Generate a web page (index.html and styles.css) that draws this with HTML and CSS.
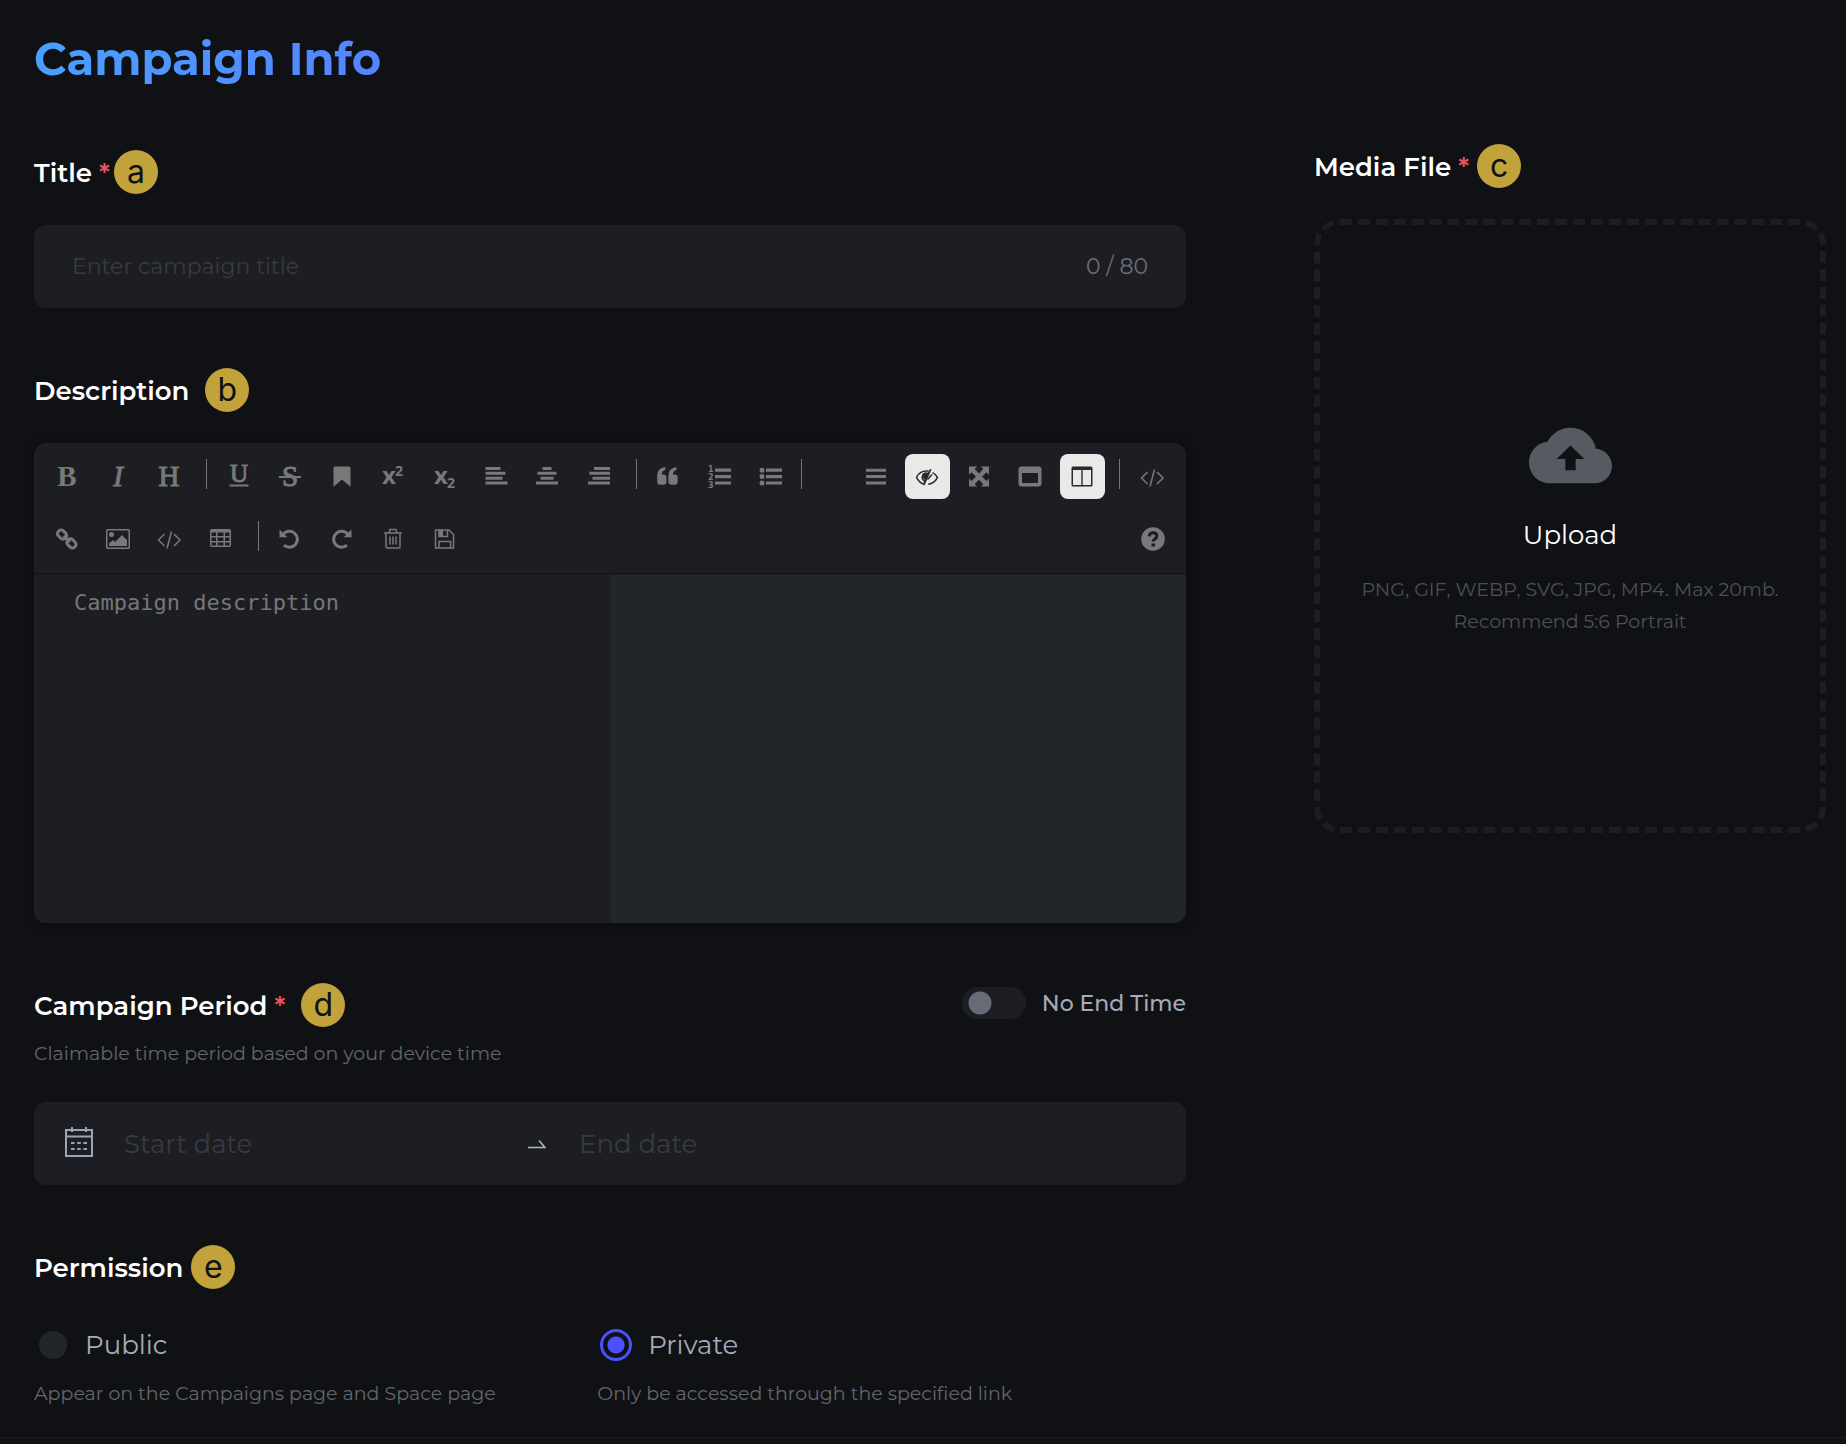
FILE: index.html
```html
<!DOCTYPE html>
<html lang="en">
<head>
<meta charset="utf-8">
<meta name="viewport" content="width=device-width, initial-scale=1">
<title>Campaign Info</title>
<link rel="stylesheet" href="styles.css">
</head>
<body>
<main class="page">
  <h1 class="page-title">Campaign Info</h1>
  <form class="layout">
    <div class="main-col">
      <section class="field">
        <div class="label-row label-row--tight">
          <label class="label" for="title">Title <span class="required">*</span></label>
          <span class="badge">a</span>
        </div>
        <div class="box">
          <input class="box-input" id="title" type="text" maxlength="80" placeholder="Enter campaign title">
          <span class="counter">0 / 80</span>
        </div>
      </section>

      <section class="field">
        <div class="label-row label-row--wide">
          <label class="label" for="description">Description</label>
          <span class="badge">b</span>
        </div>
        <div class="editor">
          <div class="toolbar">
            <div class="tools tools--format">
              <button class="tool" type="button" aria-label="Bold"><svg class="icon" viewBox="0 0 24 24"><text class="glyph glyph--bold" x="12" y="21">B</text></svg></button>
              <button class="tool" type="button" aria-label="Italic"><svg class="icon" viewBox="0 0 24 24"><text class="glyph glyph--italic" x="12" y="21">I</text></svg></button>
              <button class="tool" type="button" aria-label="Heading"><svg class="icon" viewBox="0 0 24 24"><text class="glyph" x="12" y="21">H</text></svg></button>
              <span class="divider"></span>
              <button class="tool" type="button" aria-label="Underline"><svg class="icon" viewBox="0 0 24 24"><text class="glyph glyph--small" x="12" y="17">U</text><path d="M2.500 19.500h19v2h-19z"/></svg></button>
              <button class="tool" type="button" aria-label="Strikethrough"><svg class="icon" viewBox="0 0 24 24"><text class="glyph" x="12" y="21">S</text><path d="M1 11h22v2H1z"/></svg></button>
              <button class="tool" type="button" aria-label="Mark"><svg class="icon" viewBox="0 0 24 24"><path d="M5.300 1.500h13.400q1.800 0 1.800 1.800v18.400L12 14.600l-8.500 7.100V3.300q0-1.800 1.800-1.800z"/></svg></button>
              <button class="tool" type="button" aria-label="Superscript"><svg class="icon" viewBox="0 0 24 24"><text class="script" x="1" y="19">x</text><text class="script script--mark" x="14" y="11">2</text></svg></button>
              <button class="tool" type="button" aria-label="Subscript"><svg class="icon" viewBox="0 0 24 24"><text class="script" x="1" y="19">x</text><text class="script script--mark" x="14" y="23">2</text></svg></button>
              <button class="tool" type="button" aria-label="Align left"><svg class="icon icon--bars" viewBox="0 0 24 24"><path d="M1.500 3.500h15M1.500 8.300h20M1.500 13.200h17M1.500 18h22"/></svg></button>
              <button class="tool" type="button" aria-label="Align center"><svg class="icon icon--bars" viewBox="0 0 24 24"><path d="M7.500 3.500h9M2.500 8.300h19M5.500 13.200h13M1 18h22"/></svg></button>
              <button class="tool" type="button" aria-label="Align right"><svg class="icon icon--bars" viewBox="0 0 24 24"><path d="M7 3.500h16M2.500 8.300h20.500M5.500 13.200h17.500M1 18h22"/></svg></button>
              <span class="divider"></span>
              <button class="tool" type="button" aria-label="Quote"><svg class="icon" viewBox="0 0 24 24"><path d="M9.300 2v3Q6 5.600 5.700 9.600h1.800q3 0 3 3v4.200q0 3-3 3H4.200q-3 0-3-3V10.500Q1.200 3 9.300 2zM20.500 2v3q-3.300.6-3.600 4.600h1.800q3 0 3 3v4.200q0 3-3 3h-3.300q-3 0-3-3V10.500Q12.400 3 20.500 2z"/></svg></button>
              <button class="tool" type="button" aria-label="Ordered list"><svg class="icon" viewBox="0 0 24 24"><text class="numeral" x="0" y="7">1</text><text class="numeral" x="0" y="15">2</text><text class="numeral" x="0" y="23">3</text><path d="M7 3.500h16v3.200H7zM7 10h16v3.200H7zM7 16.400h16v3.200H7z"/></svg></button>
              <button class="tool" type="button" aria-label="Bulleted list"><svg class="icon" viewBox="0 0 24 24"><circle cx="3" cy="5.200" r="2.500"/><circle cx="3" cy="11.600" r="2.500"/><circle cx="3" cy="18" r="2.500"/><path d="M7 3.500h16v3.200H7zM7 10h16v3.200H7zM7 16.400h16v3.200H7z"/></svg></button>
              <span class="divider divider--end"></span>
            </div>
            <div class="tools tools--view">
              <button class="tool" type="button" aria-label="Navigation"><svg class="icon icon--bars" viewBox="0 0 24 24"><path d="M2 5.200h20M2 11.600h20M2 18h20"/></svg></button>
              <button class="tool tool--active" type="button" aria-label="Preview" aria-pressed="true"><svg class="icon icon--line" viewBox="0 0 24 24"><path d="M13.500 6Q5 5 1.500 12.300q3 5.700 7.200 6.700M17.500 7.700Q20.600 9.300 22.500 12.300q-3 6-9.300 6.900"/><path d="M9 8.500q-4 4.500.5 7.500M12.500 14.500l4.500-5"/><path d="M15.800 4.300L8.800 20.300l2-8.800L9 13l-1-3 2-2 3 .5z" fill="currentColor"/></svg></button>
              <button class="tool" type="button" aria-label="Full screen"><svg class="icon" viewBox="0 0 24 24"><path d="M2 1.500h8.200L7.700 4l4.300 4.500L16.300 4l-2.500-2.500H22v8.200l-2.500-2.400-4.400 4.300 4.400 4.500 2.500-2.500v8h-8.200l2.500-2.400-4.300-4.500-4.300 4.500 2.500 2.400H2v-8l2.500 2.500 4.400-4.500-4.400-4.300L2 9.700z"/></svg></button>
              <button class="tool" type="button" aria-label="Page full screen"><svg class="icon" viewBox="0 0 24 24"><path fill-rule="evenodd" d="M3.500 1.500h17q3 0 3 3v14q0 3-3 3h-17q-3 0-3-3v-14q0-3 3-3zM4 8v10h16V8z"/></svg></button>
              <button class="tool tool--active" type="button" aria-label="Split view" aria-pressed="true"><svg class="icon" viewBox="0 0 24 24"><path fill-rule="evenodd" d="M3 1.500h18q1.500 0 1.500 1.500v17q0 1.500-1.500 1.500H3Q1.500 21.500 1.500 20V3q0-1.500 1.500-1.500zM3 5v15h8.300V5zM12.700 5v15H21V5z"/></svg></button>
              <span class="divider"></span>
              <button class="tool" type="button" aria-label="HTML source"><svg class="icon icon--line" viewBox="0 0 24 24"><path d="M7.500 7l-6 6 6 6M17 7l6 6-6 6M14.500 4.500l-4.500 17"/></svg></button>
            </div>
            <div class="tools tools--insert">
              <button class="tool" type="button" aria-label="Link"><svg class="icon icon--link" viewBox="0 0 24 24"><rect x="2.300" y="4" width="9.500" height="7" rx="3" transform="rotate(45 7 7.500)"/><rect x="11.700" y="13" width="9.500" height="7" rx="3" transform="rotate(45 16.500 16.500)"/><path d="M8.500 9l6.500 6"/></svg></button>
              <button class="tool" type="button" aria-label="Image"><svg class="icon" viewBox="0 0 24 24"><path fill-rule="evenodd" d="M1.500 2h21q1.500 0 1.500 1.500v17q0 1.500-1.500 1.500h-21Q0 22 0 20.500v-17Q0 2 1.500 2zM1.500 3.500v17h21v-17z"/><circle cx="5.500" cy="7.500" r="2.500"/><path d="M3 19v-2.500L7 13l2 2 7-7 5 5v6z"/></svg></button>
              <button class="tool" type="button" aria-label="Code"><svg class="icon icon--line" viewBox="0 0 24 24"><path d="M7.500 7l-6 6 6 6M17 7l6 6-6 6M14.500 4.500l-4.500 17"/></svg></button>
              <button class="tool" type="button" aria-label="Table"><svg class="icon" viewBox="0 0 24 24"><path fill-rule="evenodd" d="M3 2h17q2 0 2 2v14q0 2-2 2H3q-2 0-2-2V4q0-2 2-2zM2.500 5.500V9H7V5.500zM8.500 5.500V9h6V5.500zM16 5.500V9h4.500V5.500zM2.500 10.500V14H7v-3.500zM8.500 10.500V14h6v-3.500zM16 10.500V14h4.500v-3.500zM2.500 15.500v3H7v-3zM8.500 15.500v3h6v-3zM16 15.500v3h4.500v-3z"/></svg></button>
              <span class="divider"></span>
              <button class="tool" type="button" aria-label="Undo"><svg class="icon icon--turn" viewBox="0 0 24 24"><path d="M5 7.500A8 8 0 1 1 6 18.200"/><path class="solid" d="M1.500 2.500v7.800h8z"/></svg></button>
              <button class="tool" type="button" aria-label="Redo"><svg class="icon icon--turn" viewBox="0 0 24 24"><path d="M18 7.500A8 8 0 1 0 17 18.200"/><path class="solid" d="M21.500 2.500v7.800h-8z"/></svg></button>
              <button class="tool" type="button" aria-label="Delete"><svg class="icon icon--line" viewBox="0 0 24 24"><path d="M3 6h18M8 6l1-3.500h6L16 6M5 6v13.500q0 1.500 1.500 1.500h11q1.500 0 1.500-1.500V6M9 9.500v8M12 9.500v8M15 9.500v8"/></svg></button>
              <button class="tool" type="button" aria-label="Save"><svg class="icon icon--line" viewBox="0 0 24 24"><path d="M2.500 3h13.500l4.500 4.500V21h-18zM6 21v-6.500h11.500V21M6 3v6.500h8.500V3"/><path class="solid" d="M6 3h4v6H6z"/></svg></button>
            </div>
            <button class="tool" type="button" aria-label="Help"><svg class="icon" viewBox="0 0 24 24"><circle cx="12" cy="12" r="11.800"/><path class="question" d="M8 9.300Q9 5.800 12.200 5.800q3.600 0 3.600 3.200 0 2-2 3Q12.200 13 12.200 14.500"/><path class="question-dot" d="M10.500 16.500h3.500v3h-3.500z"/></svg></button>
          </div>
          <div class="panes">
            <textarea class="source" id="description" placeholder="Campaign description"></textarea>
            <div class="preview"></div>
          </div>
        </div>
      </section>

      <section class="field">
        <div class="label-row label-row--period">
          <label class="label" for="start">Campaign Period <span class="required">*</span></label>
          <span class="badge">d</span>
          <label class="switch-label"><input class="switch" type="checkbox" role="switch">No End Time</label>
        </div>
        <p class="hint hint--period">Claimable time period based on your device time</p>
        <div class="box box--dates">
          <svg class="calendar" viewBox="0 0 30 32"><path d="M2 4h26v26H2zM2 10.500h26M8 1v5M22 1v5"/><path d="M7 17h16M7 23h16" stroke-dasharray="3.600 2.600"/></svg>
          <input class="box-input box-input--start" id="start" type="text" placeholder="Start date">
          <svg class="arrow" viewBox="0 0 18 10"><path d="M0 8.500h17L11 1.500"/></svg>
          <input class="box-input" type="text" placeholder="End date" aria-label="End date">
        </div>
      </section>

      <section class="field" role="radiogroup" aria-label="Permission">
        <div class="label-row label-row--permission">
          <span class="label">Permission</span>
          <span class="badge">e</span>
        </div>
        <div class="options">
          <div>
            <label class="option"><input class="radio" type="radio" name="permission">Public</label>
            <p class="hint">Appear on the Campaigns page and Space page</p>
          </div>
          <div>
            <label class="option"><input class="radio" type="radio" name="permission" checked>Private</label>
            <p class="hint">Only be accessed through the specified link</p>
          </div>
        </div>
      </section>
    </div>

    <div class="side-col">
      <div class="label-row">
        <label class="label" for="media">Media File <span class="required">*</span></label>
        <span class="badge">c</span>
      </div>
      <label class="upload">
        <input class="file" id="media" type="file">
        <svg class="cloud" viewBox="0 0 24 24"><path d="M19.350 10.040A7.490 7.490 0 0 0 12 4C9.110 4 6.600 5.640 5.350 8.040A5.994 5.994 0 0 0 0 14c0 3.310 2.690 6 6 6h13c2.760 0 5-2.240 5-5 0-2.640-2.050-4.780-4.650-4.960zM13.500 13v3.300h-3V13H8l4-3.900 4 3.900z"/></svg>
        <span class="upload-title">Upload</span>
        <span class="upload-hint">PNG, GIF, WEBP, SVG, JPG, MP4. Max 20mb.<br>Recommend 5:6 Portrait</span>
      </label>
    </div>
  </form>
</main>
</body>
</html>
```
FILE: styles.css
```css
* {
  box-sizing: border-box;
}

body {
  margin: 0;
  background: #101114;
  color: #fff;
  font-family: Montserrat, Inter, sans-serif;
}

p {
  margin: 0;
}

button,
input,
textarea {
  font: inherit;
}

.page {
  padding: 24px 20px 28px 34px;
  border-bottom: 1px solid #1b1c20;
}

.page-title {
  width: fit-content;
  margin: 0 0 50px;
  font-size: 45px;
  line-height: 70px;
  font-weight: 700;
  background: linear-gradient(90deg, #4a9fff, #5584ff);
  background-clip: text;
  color: transparent;
}

.layout {
  display: grid;
  grid-template-columns: minmax(0, 9fr) minmax(0, 4fr);
  gap: 128px;
  align-items: start;
}

.main-col {
  display: flex;
  flex-direction: column;
  gap: 60px;
  padding-top: 6px;
}

.label-row {
  display: flex;
  align-items: center;
  gap: 8px;
  height: 44px;
  margin-bottom: 31px;
}

.label-row--tight {
  gap: 4px;
}

.label-row--wide {
  gap: 16px;
}

.label-row--period {
  gap: 16px;
  margin-bottom: 12px;
}

.label-row--permission {
  margin-bottom: 39px;
}

.label {
  padding-top: 2px;
  font-size: 26px;
  line-height: 32px;
  font-weight: 600;
}

.required {
  color: #e5535a;
}

.badge {
  display: grid;
  place-items: center;
  width: 44px;
  height: 44px;
  border-radius: 50%;
  background: #c2a23a;
  color: #101114;
  font-family: Inter, sans-serif;
  font-size: 32px;
  line-height: 40px;
}

.box {
  display: flex;
  align-items: center;
  height: 83px;
  padding: 0 38px;
  border-radius: 12px;
  background: #1d1e23;
  font-size: 22px;
}

.box-input {
  flex: 1;
  min-width: 0;
  padding: 0;
  border: 0;
  outline: 0;
  background: none;
  color: #fff;
}

.box-input::placeholder {
  color: #383b40;
  opacity: 1;
}

.counter {
  color: #6b6e76;
}

.box--dates {
  padding: 0 30px;
  font-size: 26px;
}

.box-input--start {
  flex: 0 0 404px;
}

.calendar {
  width: 30px;
  height: 32px;
  margin: 0 30px 4px 0;
  fill: none;
  stroke: #9da3b0;
  stroke-width: 2;
}

.arrow {
  width: 18px;
  height: 10px;
  margin-right: 33px;
  fill: none;
  stroke: #b4b8c2;
  stroke-width: 1.500;
}

.editor {
  display: flex;
  flex-direction: column;
  height: 480px;
  border-radius: 12px;
  overflow: hidden;
  background: #1d1e23;
  box-shadow: 0 2px 8px #0a0d10;
}

.toolbar {
  display: flex;
  flex-wrap: wrap;
  justify-content: space-between;
  row-gap: 17px;
  padding: 11px 11px 12px 10px;
  border-bottom: 1px solid #101114;
}

.tools {
  display: flex;
  justify-content: space-between;
}

.tools--format {
  width: 758px;
}

.tools--view {
  width: 322px;
}

.tools--insert {
  width: 423px;
}

.tool {
  display: grid;
  place-items: center;
  width: 45px;
  height: 45px;
  padding: 0;
  border: 0;
  border-radius: 8px;
  background: none;
  color: #797979;
}

.tool--active {
  background: #e9e9e9;
  color: #2b2b2b;
}

.divider {
  width: 1px;
  height: 30px;
  margin: 5px 3px 0 8px;
  background: #75767a;
}

.divider--end {
  margin: 5px 0 0 1px;
}

.icon {
  width: 24px;
  height: 24px;
  overflow: visible;
  fill: currentColor;
}

.icon--bars {
  fill: none;
  stroke: currentColor;
  stroke-width: 3;
}

.icon--line {
  fill: none;
  stroke: currentColor;
  stroke-width: 1.500;
}

.icon--link,
.icon--turn {
  fill: none;
  stroke: currentColor;
  stroke-width: 3;
}

.solid {
  fill: currentColor;
  stroke: none;
}

.question {
  fill: none;
  stroke: #1d1e23;
  stroke-width: 3;
}

.question-dot {
  fill: #1d1e23;
}

.glyph {
  font: 29px "Liberation Serif", serif;
  text-anchor: middle;
  stroke: currentColor;
  stroke-width: 1;
}

.glyph--bold {
  font-weight: bold;
  stroke: none;
}

.glyph--italic {
  font-style: italic;
}

.glyph--small {
  font-size: 25px;
}

.script {
  font: bold 24px "Open Sans", sans-serif;
}

.script--mark {
  font-size: 14px;
}

.numeral {
  font: bold 8px "DejaVu Sans", sans-serif;
}

.panes {
  display: grid;
  grid-template-columns: 1fr 1fr;
  flex: 1;
}

.source {
  padding: 15px 40px;
  border: 0;
  outline: 0;
  resize: none;
  background: #1d1e23;
  color: #fff;
  font: 22px/28px "DejaVu Sans Mono", monospace;
}

.source::placeholder {
  color: #75767a;
  opacity: 1;
}

.preview {
  background: #222529;
}

.switch-label {
  display: flex;
  align-items: center;
  gap: 16px;
  margin: 0 0 4px auto;
  color: #a5abb8;
  font-size: 22px;
  font-weight: 500;
}

.switch {
  appearance: none;
  width: 64px;
  height: 32px;
  margin: 0;
  border-radius: 16px;
  background: radial-gradient(circle at 18px 16px, #676b76 11px, #1d1e23 12px);
}

.hint {
  color: #62656d;
  font-size: 19px;
  line-height: 30px;
}

.hint--period {
  margin-bottom: 33px;
}

.options {
  display: grid;
  grid-template-columns: 22fr 23fr;
}

.option {
  display: flex;
  align-items: center;
  gap: 16px;
  height: 34px;
  margin: 0 0 17px 3px;
  color: #a5abb8;
  font-size: 26px;
}

.radio {
  appearance: none;
  width: 32px;
  height: 32px;
  margin: 0;
  border: 2px solid transparent;
  border-radius: 50%;
  background: #222529 padding-box;
}

.radio:checked {
  border: 3px solid #4a52ff;
  background: radial-gradient(circle, #4a52ff 8px, #101114 9px) padding-box;
}

.upload {
  position: relative;
  display: flex;
  flex-direction: column;
  align-items: center;
  justify-content: center;
  aspect-ratio: 5 / 6;
  border: 6px dashed #1d1e22;
  border-radius: 26px;
  text-align: center;
}

.file {
  position: absolute;
  inset: 0;
  opacity: 0;
}

.cloud {
  width: 83px;
  height: 83px;
  margin-bottom: 21px;
  fill: #565a63;
}

.upload-title {
  margin-bottom: 22px;
  font-size: 26px;
  line-height: 34px;
}

.upload-hint {
  color: #4c5059;
  font-size: 19px;
  line-height: 32px;
}
```
